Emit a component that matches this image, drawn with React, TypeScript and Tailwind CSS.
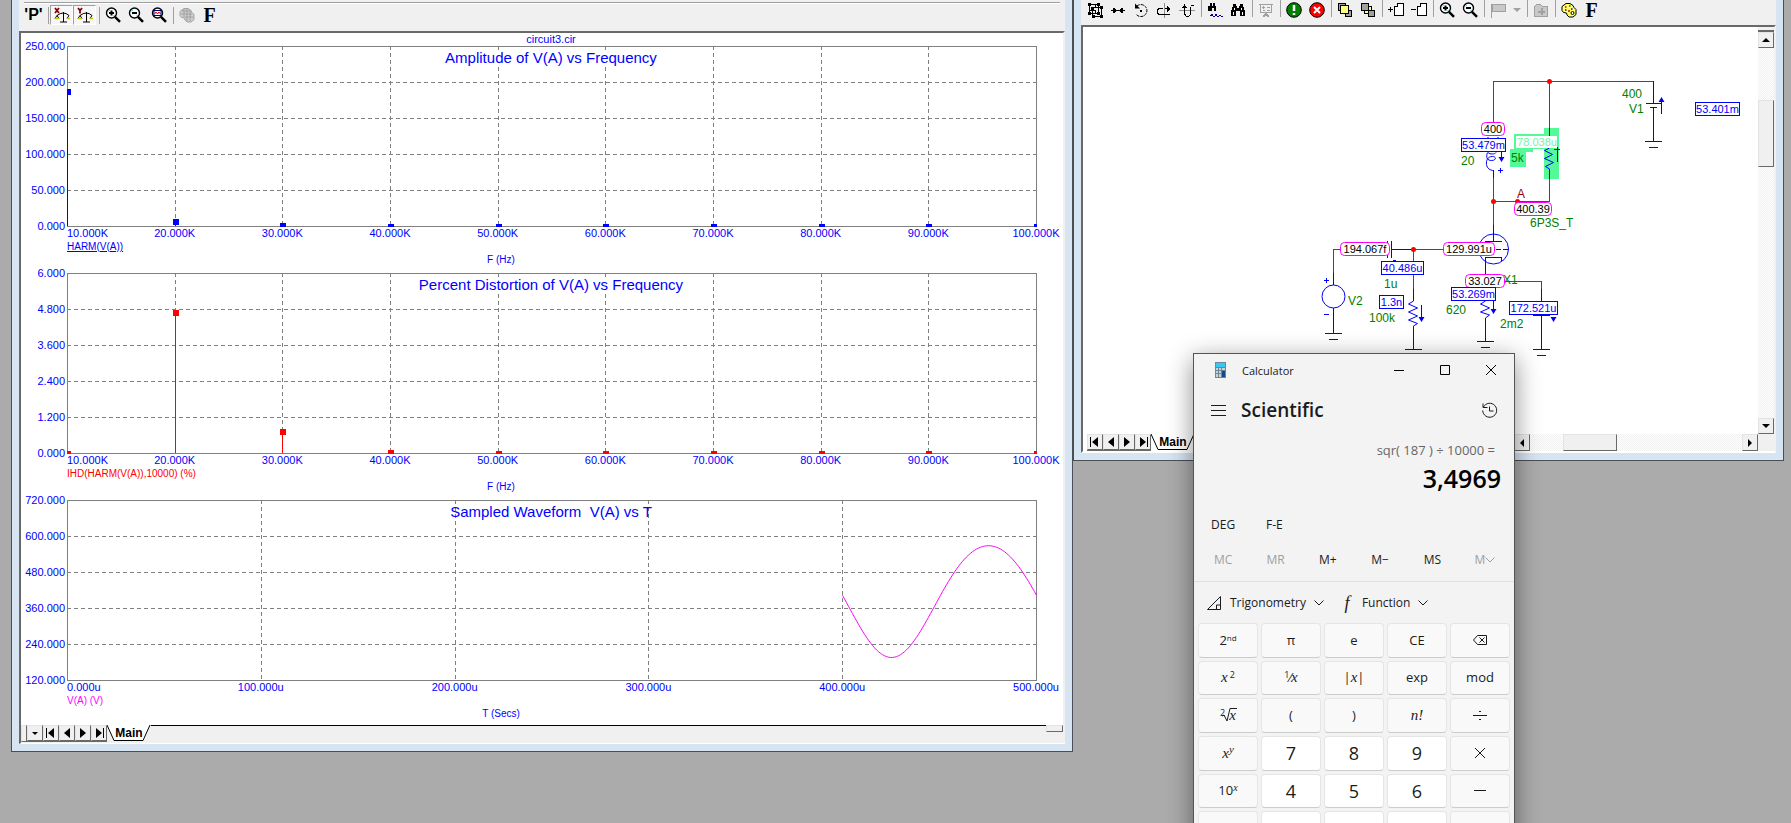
import type { ReactNode } from "react";
import clsx from "clsx";

type Point = [x: number, y: number];

type ChartProps = {
  title: string;
  xLabels: string[];
  yLabels: string[];
  xTitle: string;
  legend: string;
  legendClass: string;
  children: ReactNode;
};

// Plot frame inside a chart's 1042 x 227 view box
const LEFT = 46;
const TOP = 4;
const WIDTH = 969;
const HEIGHT = 180;
const BOTTOM = TOP + HEIGHT;

const FREQUENCIES = [10, 20, 30, 40, 50, 60, 70, 80, 90, 100].map((f) => `${f}.000K`);
const TIMES = [0, 100, 200, 300, 400, 500].map((t) => `${t}.000u`);

function Chart({ title, xLabels, yLabels, xTitle, legend, legendClass, children }: ChartProps) {
  const xStep = WIDTH / (xLabels.length - 1);
  const yStep = HEIGHT / (yLabels.length - 1);
  const titleWidth = title.length * 7;

  return (
    <svg
      viewBox="0 0 1042 227"
      className="block w-full overflow-visible fill-[#0000ff] text-[10px]"
      role="img"
      aria-label={title}
    >
      <g className="fill-none stroke-[#808080]" shapeRendering="crispEdges">
        {xLabels.slice(1, -1).map((label, index) => {
          const x = Math.round(LEFT + xStep * (index + 1)) + 0.5;
          return <line key={label} x1={x} x2={x} y1={TOP} y2={BOTTOM} strokeDasharray="4 3" />;
        })}
        {yLabels.slice(1, -1).map((label, index) => {
          const y = TOP + yStep * (index + 1) + 0.5;
          return <line key={label} x1={LEFT} x2={LEFT + WIDTH} y1={y} y2={y} strokeDasharray="4 3" />;
        })}
        <rect x={LEFT + 0.5} y={TOP + 0.5} width={WIDTH} height={HEIGHT} />
      </g>
      <rect x={530 - titleWidth / 2} y={8} width={titleWidth} height={16} className="fill-white" />
      <text x={530} y={21} textAnchor="middle" className="text-[15px] whitespace-pre">
        {title}
      </text>
      <g className="text-[11px]">
        {xLabels.map((label, index) => (
          <text
            key={label}
            x={LEFT + xStep * index}
            y={195}
            textAnchor={index ? "middle" : "start"}
          >
            {label}
          </text>
        ))}
        {yLabels.map((label, index) => (
          <text key={label} x={44} y={TOP + yStep * index + 4} textAnchor="end">
            {label}
          </text>
        ))}
      </g>
      <text x={LEFT} y={208} className={legendClass}>
        {legend}
      </text>
      <text x={480} y={221} textAnchor="middle">
        {xTitle}
      </text>
      {children}
    </svg>
  );
}

// One stem with a square marker per harmonic, cut off at the frame
function Stems({ values, max, className }: { values: number[]; max: number; className: string }) {
  return (
    <g className={className} shapeRendering="crispEdges">
      {values.map((value, index) => {
        const x = Math.round(LEFT + (WIDTH / 9) * index);
        const y = Math.round(BOTTOM - (value / max) * HEIGHT);
        const x1 = Math.max(x - 2, LEFT);
        const x2 = Math.min(x + 4, LEFT + WIDTH + 1);
        return (
          <g key={index}>
            <rect x={x} y={y} width={1} height={BOTTOM - y} />
            <rect x={x1} y={y - 2} width={x2 - x1} height={Math.min(6, BOTTOM - y + 3)} />
          </g>
        );
      })}
    </g>
  );
}

function waveform() {
  const points: string[] = [];
  for (let x = 821; x <= 1015; x += 2) {
    const angle = (Math.PI * (x - 870)) / 97;
    const y = 102.9 + 55.9 * Math.cos(angle) + 2.7 * Math.cos(2 * angle);
    points.push(`${x + 0.5},${y.toFixed(1)}`);
  }
  return points.join(" ");
}

function Icon({ children, crisp = true }: { children: ReactNode; crisp?: boolean }) {
  return (
    <svg
      viewBox="0 0 16 16"
      className="size-4 fill-none stroke-black"
      shapeRendering={crisp ? "crispEdges" : "auto"}
      aria-hidden="true"
    >
      {children}
    </svg>
  );
}

function Magnifier({ children }: { children: ReactNode }) {
  return (
    <Icon crisp={false}>
      <circle cx="6.5" cy="6" r="5" className="fill-white" strokeWidth="1.4" />
      <path d="M3.5 4 5 2.8M8.5 9.2 9.7 7.8" className="stroke-cyan-400" />
      <path d="m10 9.8 5 5" strokeWidth="2.4" />
      {children}
    </Icon>
  );
}

function ZoomIn() {
  return (
    <Magnifier>
      <path d="M4 6h5M6.5 3.5v5" strokeWidth="2" />
    </Magnifier>
  );
}

function ZoomOut() {
  return (
    <Magnifier>
      <path d="M4 6h5" strokeWidth="2" />
    </Magnifier>
  );
}

function Scales({ axis }: { axis: "X" | "Y" }) {
  return (
    <Icon crisp={false}>
      <path
        d={axis === "X" ? "M1 1l4 5M5 1 1 6" : "M1 1l2 2.5L5 1M3 3v3.5"}
        className="stroke-[#8b0000]"
        strokeWidth="1.8"
      />
      <path d="M9.5 5v10M6 15h7M3 8.5q6.5-5 12 0M3 8.5l-2 3h4zM15 8.5l-2 3h3" />
      <path d="M1 11.5h4M13 11.5h3" className="stroke-[#c8c800]" strokeWidth="1.5" />
    </Icon>
  );
}

function Binoculars() {
  return (
    <Icon>
      <path
        d="M3 2h3v2h1v2h2V4h1V2h3v3h1v3h1v6h-5V9H6v5H1V8h1V5h1z"
        className="fill-black stroke-none"
      />
      <path d="M4.5 6v2M3.5 10v3M11.5 6v2M12.5 10v3" className="stroke-white" />
    </Icon>
  );
}

function Layers({ front }: { front: boolean }) {
  return (
    <Icon>
      <path d="M1.5 1.5h7v7h-7zM8.5 8.5h6v6h-6z" className="fill-[#a0a0a0]" />
      <path
        d={front ? "M3.5 3.5h8v8h-8z" : "M8.5 4.5h3v4h-3v3h-4v-3h4z"}
        className="fill-[#ffff80]"
      />
    </Icon>
  );
}

function PageIcon({ plus }: { plus: boolean }) {
  return (
    <Icon>
      <path d="M9.5 1.5h6v12h-9v-9h3zM9.5 1.5v3h-3" className="fill-white" />
      <path d={plus ? "M0 7.5h5M2.5 5v5" : "M0 7.5h5"} />
    </Icon>
  );
}

function Palette({ disabled = false }: { disabled?: boolean }) {
  return (
    <Icon crisp={false}>
      <path
        d="M5 1.5h4l3 2 1 2 2 2v5l-3 2.5H8l-2-2-.5-2-3-.5-1.5-2v-4z"
        className={disabled ? "fill-[#d0d0d0] stroke-[#a0a0a0]" : "fill-[#ffff60]"}
      />
      {disabled ? (
        <path d="M3 4h8M2 7h11M6 10h8M5 2v8M8 2v12M11 4v10" className="stroke-[#a0a0a0]" />
      ) : (
        <>
          <path d="M4 5h1.5M7 9h2" className="stroke-[#e00000]" strokeWidth="1.6" />
          <path d="M8 4h1.5" className="stroke-[#008000]" strokeWidth="1.6" />
          <path d="M4 8h1.5M10 7h1.5" className="stroke-[#0000ff]" strokeWidth="1.6" />
          <circle cx="11.5" cy="11" r="1.5" className="fill-white" />
        </>
      )}
    </Icon>
  );
}

function ToolButton({
  label,
  pressed = false,
  children,
}: {
  label: string;
  pressed?: boolean;
  children: ReactNode;
}) {
  return (
    <button
      type="button"
      aria-label={label}
      className={clsx(
        "flex h-5 w-[23px] shrink-0 items-center justify-center whitespace-nowrap",
        pressed && "border border-[#a0a0a0] border-r-white border-b-white bg-[#f7f7f7]",
      )}
    >
      {children}
    </button>
  );
}

function Divider() {
  return <div className="mr-px ml-[3px] h-[17px] w-px shrink-0 bg-[#a0a0a0]" />;
}

function FontGlyph() {
  return <span className="font-['Liberation_Serif',serif] text-[20px] leading-4 font-bold">F</span>;
}

function AnalysisToolbar() {
  return (
    <div className="flex h-[31px] flex-col bg-[#f0f0f0] pt-0.5">
      <div className="mx-[5px] h-0.5 border-t border-[#a0a0a0] bg-white" />
      <div className="flex items-center pt-px pl-[3px]">
        <ToolButton label="Properties">
          <span className="text-[16px] leading-4 font-bold">'P'</span>
        </ToolButton>
        <Divider />
        <ToolButton label="Auto scale X" pressed>
          <Scales axis="X" />
        </ToolButton>
        <ToolButton label="Auto scale Y" pressed>
          <Scales axis="Y" />
        </ToolButton>
        <Divider />
        <ToolButton label="Zoom in">
          <ZoomIn />
        </ToolButton>
        <ToolButton label="Zoom out">
          <ZoomOut />
        </ToolButton>
        <ToolButton label="Zoom to plot">
          <Magnifier>
            <path d="M3 3.5h7v5H3z" className="stroke-[#000080]" />
            <path d="m3.5 7 1.5-2 1.5 2L8 5l1.5 2" className="stroke-red-600" />
          </Magnifier>
        </ToolButton>
        <Divider />
        <ToolButton label="Colors">
          <Palette disabled />
        </ToolButton>
        <ToolButton label="Font">
          <FontGlyph />
        </ToolButton>
      </div>
    </div>
  );
}

function SchematicToolbar() {
  return (
    <div className="flex h-[25px] items-start bg-[#f0f0f0] pl-0.5">
      <ToolButton label="Group">
        <Icon>
          <path d="M2.5 2.5h9v9h-9zM5.5 5.5h9v9h-9zM8.5 2v4M2 8.5h6v3" />
          <path
            d="M1 1h3v3H1zM10 1h3v3h-3zM1 10h3v3H1zM10 10h3v3h-3zM4 5h3v3H4zM13 4h3v3h-3zM5 13h3v3H5zM13 13h3v3h-3z"
            className="fill-black stroke-none"
          />
        </Icon>
      </ToolButton>
      <ToolButton label="Stretch">
        <Icon>
          <path d="M1 8.5h14" />
          <path d="M3 6h2l2 2.5L5 11H3zM13 6h-2L9 8.5l2 2.5h2z" className="fill-black stroke-none" />
        </Icon>
      </ToolButton>
      <ToolButton label="Rotate">
        <Icon crisp={false}>
          <path d="M4 4a6 6 0 1 1-1 8" strokeDasharray="3 1" />
          <path d="M2 1.5v5h5zM7 8h2v2H7z" className="fill-black stroke-none" />
        </Icon>
      </ToolButton>
      <ToolButton label="Flip X">
        <Icon>
          <path d="M8.5 1v15" className="stroke-[#909090]" />
          <path d="M7 6.5H3l-2 2v2l2 2h4M7 12.5h7M9 6.5h3" />
          <path d="m11 4 4 3-4 3z" className="fill-black stroke-none" />
        </Icon>
      </ToolButton>
      <ToolButton label="Flip Y">
        <Icon>
          <path d="M0 8.5h16" className="stroke-[#909090]" />
          <path d="M5.5 4v8l2 2.5h2l2-2V5M11.5 3.5h3" />
          <path d="m3 6 2.5-4L8 6z" className="fill-black stroke-none" />
        </Icon>
      </ToolButton>
      <Divider />
      <ToolButton label="Find next">
        <Icon>
          <path d="M3 1h2v3h1V1h2v3h1v5H7V6H5v3H1V4h2z" className="fill-black stroke-none" />
          <path d="M3 13.5h1l1-1 1 1.5h2l1-1.5 1 1.5h2l1-1 1 1h2" className="stroke-[#0000a0]" />
        </Icon>
      </ToolButton>
      <ToolButton label="Find">
        <Binoculars />
      </ToolButton>
      <Divider />
      <ToolButton label="Presentation">
        <Icon>
          <path
            d="M1 2.5h14M2.5 2v8.5h11V2M8 11v2M5 15l3-3 3 3M4 5.5h3M9 5.5h3M5 8.5h2M9 8.5h3M5.5 4v3"
            className="stroke-[#a0a0a0]"
            strokeWidth="1.5"
          />
        </Icon>
      </ToolButton>
      <Divider />
      <ToolButton label="Enable">
        <Icon crisp={false}>
          <circle cx="8" cy="8" r="7.3" className="fill-[#008000]" />
          <path d="M8 3v6M8 11v2" className="stroke-white" strokeWidth="2.5" />
        </Icon>
      </ToolButton>
      <ToolButton label="Disable">
        <Icon crisp={false}>
          <circle cx="8" cy="8" r="7.3" className="fill-[#ff0000]" />
          <path d="m5 5 6 6M11 5l-6 6" className="stroke-white" strokeWidth="2" />
        </Icon>
      </ToolButton>
      <Divider />
      <ToolButton label="Bring to front">
        <Layers front />
      </ToolButton>
      <ToolButton label="Send to back">
        <Layers front={false} />
      </ToolButton>
      <Divider />
      <ToolButton label="Add page">
        <PageIcon plus />
      </ToolButton>
      <ToolButton label="Delete page">
        <PageIcon plus={false} />
      </ToolButton>
      <Divider />
      <ToolButton label="Zoom in">
        <ZoomIn />
      </ToolButton>
      <ToolButton label="Zoom out">
        <ZoomOut />
      </ToolButton>
      <Divider />
      <ToolButton label="Flag">
        <Icon>
          <path d="M1.5 2v14M2 2.5h13v7H2z" className="fill-[#c8c8c8] stroke-[#a0a0a0]" />
        </Icon>
      </ToolButton>
      <button type="button" aria-label="Flag list" className="flex h-5 w-[15px] items-center justify-center">
        <svg viewBox="0 0 8 4" className="h-1 w-2 fill-[#a0a0a0]" aria-hidden="true">
          <path d="M0 0h8L4 4z" />
        </svg>
      </button>
      <Divider />
      <ToolButton label="Folder">
        <Icon>
          <path d="M1.5 14.5v-10l2-2h4l2 2h5v10z" className="fill-[#c8c8c8] stroke-[#a0a0a0]" />
          <path d="M5 9.5h7M8.5 6v7" className="stroke-[#a0a0a0]" strokeWidth="2" />
        </Icon>
      </ToolButton>
      <Divider />
      <ToolButton label="Colors">
        <Palette />
      </ToolButton>
      <ToolButton label="Font">
        <FontGlyph />
      </ToolButton>
    </div>
  );
}

const RAISED = "border border-r-[#696969] border-b-[#696969] border-t-[#e3e3e3] border-l-[#e3e3e3] bg-[#f0f0f0]";
const DITHER = "bg-[repeating-conic-gradient(#ffffff_0_25%,#f0f0f0_0_50%)] bg-[length:2px_2px]";

const ARROWS: Record<string, string> = {
  menu: "M5 7h6l-3 3z",
  first: "M3 3h1v10H3zM11 3v10L5 8z",
  previous: "M11 3v10L5 8z",
  next: "M5 3v10l6-5z",
  last: "M5 3v10l6-5zM12 3h1v10h-1z",
  up: "M4 10h8L8 6z",
  down: "M4 6h8l-4 4z",
  left: "M10 4v8L6 8z",
  right: "M6 4v8l4-4z",
};

function ArrowButton({ kind, className }: { kind: string; className: string }) {
  return (
    <button
      type="button"
      aria-label={kind}
      className={clsx("flex shrink-0 items-center justify-center overflow-hidden", RAISED, className)}
    >
      <svg viewBox="0 0 16 16" className="size-4 shrink-0 fill-black" aria-hidden="true">
        <path d={ARROWS[kind]} />
      </svg>
    </button>
  );
}

function PageTabs({ kinds }: { kinds: string[] }) {
  return (
    <div className="flex h-[17px]">
      <div className="flex bg-[#696969] pb-px">
        {kinds.map((kind) => (
          <ArrowButton key={kind} kind={kind} className="w-4" />
        ))}
      </div>
      <button type="button" className="relative h-4 w-11 text-[12px] leading-4 font-bold">
        <svg viewBox="0 0 44 16" className="absolute inset-0 h-4 w-11" aria-hidden="true">
          <path d="M0 0 7 15.5h29L43 0" className="fill-white stroke-black" />
        </svg>
        <span className="relative">Main</span>
      </button>
    </div>
  );
}

function AnalysisWindow() {
  return (
    <section className="flex min-w-0 flex-[1046] flex-col border-x border-b border-[#4a4f55] bg-[#d7e4f2] px-[7px] pb-[7px]">
      <AnalysisToolbar />
      <div className="border-2 border-t-[#696969] border-r-[#f0f0f0] border-b-0 border-l-[#696969] bg-white">
        <div className="h-[9px] pl-[18px] text-center text-[11px] leading-[13px] text-[#0000ff]">circuit3.cir</div>
        <Chart
          title="Amplitude of V(A) vs Frequency"
          xLabels={FREQUENCIES}
          yLabels={["250.000", "200.000", "150.000", "100.000", "50.000", "0.000"]}
          xTitle="F (Hz)"
          legend="HARM(V(A))"
          legendClass="underline"
        >
          <Stems values={[187, 7.6, 1.3, 0, 0, 0, 0, 0, 0, 0]} max={250} className="fill-[#0000ff]" />
        </Chart>
        <Chart
          title="Percent Distortion of V(A) vs Frequency"
          xLabels={FREQUENCIES}
          yLabels={["6.000", "4.800", "3.600", "2.400", "1.200", "0.000"]}
          xTitle="F (Hz)"
          legend="IHD(HARM(V(A)),10000) (%)"
          legendClass="fill-[#ff0000]"
        >
          <Stems values={[0, 4.7, 0.75, 0.05, 0, 0, 0, 0, 0, 0]} max={6} className="fill-[#ff0000]" />
        </Chart>
        <Chart
          title="Sampled Waveform  V(A) vs T"
          xLabels={TIMES}
          yLabels={["720.000", "600.000", "480.000", "360.000", "240.000", "120.000"]}
          xTitle="T (Secs)"
          legend="V(A) (V)"
          legendClass="fill-[#ff00ff]"
        >
          <polyline points={waveform()} className="fill-none stroke-[#ff00ff]" />
        </Chart>
        <div className="h-0.5" />
      </div>
      <div className="flex h-[19px] items-start border-b border-l-2 border-b-white border-l-[#696969] bg-[#f0f0f0]">
        <div className={clsx("h-[17px] w-1.5", RAISED)} />
        <PageTabs kinds={["menu", "first", "previous", "next", "last"]} />
        <div className="h-px flex-1 bg-black" />
        <div className={clsx("mr-0.5 h-[7px] w-[17px]", RAISED)} />
      </div>
    </section>
  );
}

// Value shown over the sheet: voltages in rounded magenta boxes, currents in blue ones
function Probe({
  x,
  y,
  width,
  text,
  voltage = false,
}: {
  x: number;
  y: number;
  width: number;
  text: string;
  voltage?: boolean;
}) {
  return (
    <g>
      <rect
        x={x + 0.5}
        y={y + 0.5}
        width={width}
        height={13}
        rx={voltage ? 4 : 0}
        className={clsx("fill-white", voltage ? "stroke-[#ff00ff]" : "stroke-[#0000ff]")}
      />
      <text
        x={x + width / 2 + 0.5}
        y={y + 11}
        textAnchor="middle"
        className={clsx("text-[11px]", voltage ? "fill-black" : "fill-[#0000ff]")}
      >
        {text}
      </text>
    </g>
  );
}

const LABELS: [x: number, y: number, text: string][] = [
  [1622, 98, "400"],
  [1629, 113, "V1"],
  [1461, 165, "20"],
  [1530, 227, "6P3S_T"],
  [1384, 288, "1u"],
  [1369, 322, "100k"],
  [1348, 305, "V2"],
  [1503, 284, "X1"],
  [1446, 314, "620"],
  [1500, 328, "2m2"],
];

const NODES: Point[] = [
  [1549, 81],
  [1493, 201],
  [1517, 201],
  [1413, 249],
];

const GROUNDS: Point[] = [
  [1653, 141],
  [1333, 333],
  [1413, 349],
  [1485, 341],
  [1541, 349],
];

function Schematic() {
  return (
    <svg
      viewBox="1083 27 675 407"
      preserveAspectRatio="xMinYMin slice"
      className="h-[407px] min-w-0 flex-1 bg-white"
      role="img"
      aria-label="Amplifier schematic"
    >
      <path d="M1544 128h15v51h-15zM1514 134h45v15h-26v3h-19zM1510 149h16v18h-16z" className="fill-[#54fa98]" />
      <path
        d="M1493.5 122V81.5h160M1549.5 81v47M1549.5 179v22.5h-56M1493.5 178v47M1333.5 273v-23.5h8M1413.5 249.5h30M1413.5 249v40M1505 281.5h36.5v8"
        className="fill-none stroke-[#008000]"
        shapeRendering="crispEdges"
      />
      <g className="fill-none stroke-[#0000ff]">
        <path
          shapeRendering="crispEdges"
          d="M1653.5 81v22M1646 103.5h15.5M1650 107.5h7M1653.5 107v34M1661.5 98v16M1549.5 128v20M1549.5 169v10M1557.5 147v15M1554 149.5h6M1493.5 170v8M1501.5 152v6M1498 170.5h5M1500.5 168v5M1493.5 225v16M1485 241.5h17M1496 249.5h5M1503 249.5h5M1485.5 274v-16.5h16v3M1387.5 241v17M1391.5 241v17M1391 249.5h22M1393 260.5h3M1413.5 289v12M1413.5 326v23M1421.5 305v13M1333.5 273v12M1333.5 308v25M1324 280.5h5M1326.5 278v5M1324 314.5h5M1485.5 318v23M1493.5 300v10M1541.5 289v12M1533 315.5h17M1541.5 315v34"
        />
        <path d="M1549.5 148l-5 2.5 8 4-8 4 9 4-8 4 4 2.5M1413.5 301l-5 3 9 4-9 4 9 4-9 4 9 3.5-4 2.5M1485.5 301l-5 3 9 4-9 4 9 3-4 3" />
        <path d="M1488 137v3M1498 137v2M1487.500 152.500c-2 5 0 8 4 8 5 0 5-4 1-4-5 0-6.500 4-6 8 .5 4 4 6 7 6M1488 152.500c2 2 7 2 8 0" />
        <circle cx="1493.5" cy="249" r="15" />
        <circle cx="1333.5" cy="296.5" r="11.5" />
        {GROUNDS.map(([x, y]) => (
          <path key={x} d={`M${x - 8} ${y + 0.5}h17M${x - 4} ${y + 6.5}h9`} shapeRendering="crispEdges" />
        ))}
      </g>
      <path
        d="M1658.5 102h6l-3-5zM1498.5 157h6l-3 5zM1418.5 317h6l-3 5zM1490.5 309h6l-3 5zM1550.5 317h6l-3 5z"
        className="fill-[#0000ff]"
      />
      {NODES.map(([x, y]) => (
        <circle key={`${x}-${y}`} cx={x + 0.5} cy={y + 0.5} r="2.5" className="fill-[#ff0000]" />
      ))}
      <g className="fill-[#008000] text-[12px]">
        {LABELS.map(([x, y, text]) => (
          <text key={text} x={x} y={y}>
            {text}
          </text>
        ))}
        <text x={1511} y={162}>
          5k
        </text>
        <text x={1517} y={198} className="fill-[#a00000]">
          A
        </text>
      </g>
      <Probe x={1481} y={122} width={23} text="400" voltage />
      <Probe x={1461} y={138} width={44} text="53.479m" />
      <Probe x={1695} y={102} width={44} text="53.401m" />
      <rect x={1516} y={136} width={41} height={12} className="fill-white" />
      <text x={1537} y={146} textAnchor="middle" className="fill-[#70f5a8] text-[11px]">
        78.038u
      </text>
      <Probe x={1514} y={202} width={37} text="400.39" voltage />
      <Probe x={1340} y={242} width={49} text="194.067f" voltage />
      <Probe x={1443} y={242} width={51} text="129.991u" voltage />
      <Probe x={1381} y={261} width={42} text="40.486u" />
      <Probe x={1379} y={295} width={24} text="1.3n" />
      <Probe x={1465} y={274} width={39} text="33.027" voltage />
      <Probe x={1451} y={287} width={44} text="53.269m" />
      <Probe x={1509} y={301} width={48} text="172.521u" />
    </svg>
  );
}

function SchematicWindow() {
  return (
    <section className="flex min-w-0 flex-[695] flex-col border-x border-b border-[#4a4f55] bg-[#d7e4f2] px-[7px] pb-[7px]">
      <SchematicToolbar />
      <div className="border-2 border-t-[#696969] border-r-[#f0f0f0] border-b-white border-l-[#696969] bg-white">
        <div className="flex">
          <Schematic />
          <div className={clsx("flex w-4 flex-col", DITHER)}>
            <div className="h-[5px] border-b-2 border-[#696969] bg-[#f0f0f0]" />
            <ArrowButton kind="up" className="h-4" />
            <div className={clsx("mt-[52px] h-[67px]", RAISED)} />
            <ArrowButton kind="down" className="mt-auto h-4" />
          </div>
        </div>
        <div className="flex h-[17px] bg-[#f0f0f0]">
          <div className="flex flex-1 bg-white pl-1">
            <PageTabs kinds={["first", "previous", "next", "last"]} />
          </div>
          <div className={clsx("flex w-[244px]", DITHER)}>
            <ArrowButton kind="left" className="w-4" />
            <div className={clsx("ml-[33px] w-[54px]", RAISED)} />
            <ArrowButton kind="right" className="ml-auto w-4" />
          </div>
          <div className="w-4" />
        </div>
      </div>
    </section>
  );
}

function Italic({ children }: { children: ReactNode }) {
  return <i className="font-['Liberation_Serif',serif] text-[15px]">{children}</i>;
}

function Chevron() {
  return (
    <svg viewBox="0 0 10 6" className="h-1.5 w-2.5 fill-none stroke-current" aria-hidden="true">
      <path d="m0.5 0.5 4.5 4.5L9.5 0.5" />
    </svg>
  );
}

function Glyph({ d }: { d: string }) {
  return (
    <svg viewBox="0 0 16 16" className="size-4 fill-none stroke-[#1b1b1b]" aria-hidden="true">
      <path d={d} />
    </svg>
  );
}

type Key = { name: string; face: ReactNode; digit?: boolean };

const KEYS: Key[] = [
  { name: "second", face: <span>2<sup className="text-[8px]">nd</sup></span> },
  { name: "pi", face: "π" },
  { name: "e", face: "e" },
  { name: "clear entry", face: "CE" },
  { name: "backspace", face: <Glyph d="M5.5 3.5h9v9h-9L1.5 8zM7.5 5.5l5 5M12.5 5.5l-5 5" /> },
  { name: "square", face: <span><Italic>x</Italic><sup className="ml-0.5 text-[9px]">2</sup></span> },
  { name: "reciprocal", face: <span><sup className="text-[9px]">1</sup>⁄<Italic>x</Italic></span> },
  { name: "absolute value", face: <span>|<Italic>x</Italic>|</span> },
  { name: "exponential", face: "exp" },
  { name: "modulo", face: "mod" },
  {
    name: "square root",
    face: (
      <span className="flex">
        <span className="text-[9px] leading-none">2</span>
        <svg viewBox="0 0 16 14" className="-ml-1 h-3.5 w-4 fill-none stroke-[#1b1b1b]" aria-hidden="true">
          <path d="M1 8l2-1 3 6L9 .5h7" />
        </svg>
        <span className="-ml-2">
          <Italic>x</Italic>
        </span>
      </span>
    ),
  },
  { name: "open bracket", face: "(" },
  { name: "close bracket", face: ")" },
  { name: "factorial", face: <Italic>n!</Italic> },
  { name: "divide", face: <Glyph d="M1 7.5h14M7 3.5h2M7 11.5h2" /> },
  { name: "power", face: <span><Italic>x</Italic><sup><i className="font-['Liberation_Serif',serif] text-[11px]">y</i></sup></span> },
  { name: "seven", face: "7", digit: true },
  { name: "eight", face: "8", digit: true },
  { name: "nine", face: "9", digit: true },
  { name: "multiply", face: <Glyph d="m3 3 10 10M13 3 3 13" /> },
  { name: "ten to the power", face: <span>10<sup><i className="font-['Liberation_Serif',serif] text-[10px]">x</i></sup></span> },
  { name: "four", face: "4", digit: true },
  { name: "five", face: "5", digit: true },
  { name: "six", face: "6", digit: true },
  { name: "subtract", face: <Glyph d="M2 7.5h12" /> },
  { name: "logarithm", face: "log" },
  { name: "one", face: "1", digit: true },
  { name: "two", face: "2", digit: true },
  { name: "three", face: "3", digit: true },
  { name: "add", face: <Glyph d="M2 8.5h12M8.5 2v12" /> },
];

const MEMORY = [
  { label: "MC", disabled: true },
  { label: "MR", disabled: true },
  { label: "M+" },
  { label: "M−" },
  { label: "MS" },
  { label: "M", disabled: true, menu: true },
];

function Calculator() {
  return (
    <section className="absolute top-[353px] left-[1193px] w-[322px] border border-[#555555] bg-[#f3f3f3] font-['Open_Sans',sans-serif] text-[12px] text-[#1b1b1b] shadow-[0_6px_24px_rgba(0,0,0,0.45)]">
      <header className="flex h-8 items-center pl-[18px]">
        <svg viewBox="0 0 16 16" className="size-4" aria-hidden="true">
          <path d="M3 0h11v16H3z" className="fill-[#6f8796]" />
          <path d="M4 1h9v4H4z" className="fill-[#35c8f5]" />
          <path d="M4 6h2v2H4zM7 6h2v2H7zM10 6h3v2h-3zM4 9h2v2H4zM7 9h2v2H7zM4 12h2v3H4zM7 12h2v3H7z" className="fill-[#c5d3dc]" />
          <path d="M10 9h3v6h-3z" className="fill-[#134a86]" />
        </svg>
        <span className="ml-3.5 flex-1 pt-0.5 text-[11px]">Calculator</span>
        {[
          { name: "Minimize", d: "M3 8.5h10" },
          { name: "Maximize", d: "M3.5 3.5h9v9h-9z" },
          { name: "Close", d: "m3 3 10 10M13 3 3 13" },
        ].map(({ name, d }) => (
          <button key={name} type="button" aria-label={name} className="flex h-8 w-[46px] items-center justify-center">
            <svg viewBox="0 0 16 16" className="size-4 fill-none stroke-black" aria-hidden="true">
              <path d={d} />
            </svg>
          </button>
        ))}
      </header>
      <div className="flex h-12 items-center px-4">
        <button type="button" aria-label="Open navigation">
          <Glyph d="M1 3.5h15M1 8.5h15M1 13.5h15" />
        </button>
        <h1 className="ml-[15px] flex-1 text-[19px] font-semibold">Scientific</h1>
        <button type="button" aria-label="History">
          <Glyph d="M1 1.5v4h4.500M1.5 5a7 7 0 1 1-.8 3.5M7.5 4.5v4.500h4" />
        </button>
      </div>
      <div className="mt-1.5 pr-[19px] text-right text-[13px] leading-5 text-[#666666]">sqr( 187 ) ÷ 10000 =</div>
      <output className="mt-0.5 block pr-[13px] text-right text-[25px] leading-8 font-semibold text-black">3,4969</output>
      <div className="mt-[15px] flex h-8 items-center pl-[17px]">
        <button type="button" className="w-[55px] text-left">DEG</button>
        <button type="button">F-E</button>
      </div>
      <div className="grid h-[38px] grid-cols-6 items-center px-[3px]">
        {MEMORY.map(({ label, disabled, menu }) => (
          <button
            key={label}
            type="button"
            disabled={disabled}
            className="flex items-center justify-center disabled:text-[#a0a0a0]"
          >
            {label}
            {menu && <Chevron />}
          </button>
        ))}
      </div>
      <div className="mt-0.5 flex h-[42px] items-center border-t border-[#e0e0e0] pl-3">
        <button type="button" className="flex items-center gap-2">
          <Glyph d="M1.5 14.5h13v-13zM10.5 14v-4h4" />
          Trigonometry
          <Chevron />
        </button>
        <button type="button" className="ml-4 flex items-center gap-2">
          <i className="w-3.5 font-['Liberation_Serif',serif] text-[18px] leading-5">f</i>
          Function
          <Chevron />
        </button>
      </div>
      <div className="grid h-[223px] grid-cols-5 grid-rows-6 gap-[3px] px-1">
        {KEYS.map(({ name, face, digit }) => (
          <button
            key={name}
            type="button"
            aria-label={name}
            className={clsx(
              "flex items-center justify-center rounded border border-[#e5e5e5] border-b-[#cccccc] leading-none",
              digit ? "bg-white text-[18px]" : "bg-[#f9f9f9] text-[13px]",
            )}
          >
            {face}
          </button>
        ))}
      </div>
    </section>
  );
}

export default function App() {
  return (
    <main className="relative flex h-screen items-start overflow-hidden bg-[#ababab] pr-[7px] pl-[11px] font-['Liberation_Sans',Arial,sans-serif]">
      <AnalysisWindow />
      <SchematicWindow />
      <Calculator />
    </main>
  );
}
